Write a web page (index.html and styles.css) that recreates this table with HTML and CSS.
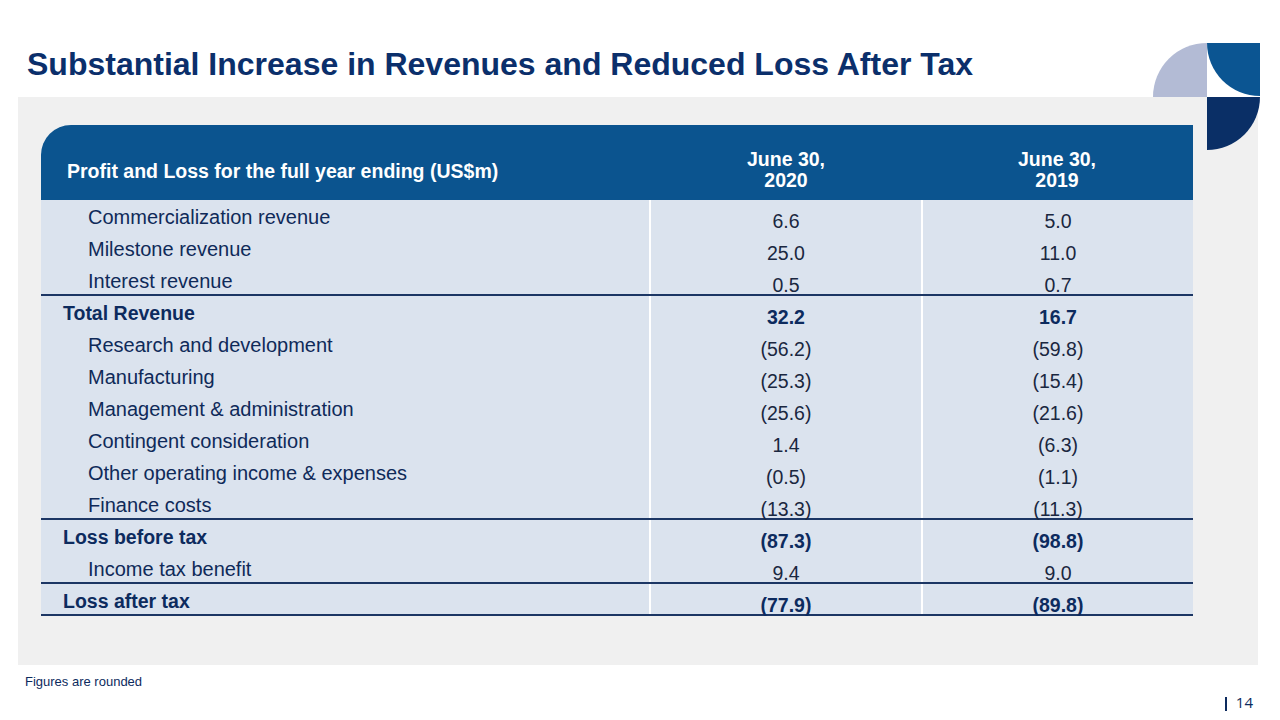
FILE: index.html
```html
<!DOCTYPE html>
<html>
<head>
<meta charset="utf-8">
<link rel="stylesheet" href="styles.css">
</head>
<body>
<div class="slide">
  <header class="top">
    <h1 class="title">Substantial Increase in Revenues and Reduced Loss After Tax</h1>
  </header>
  <svg class="logo" width="108" height="108" viewBox="0 0 108 108">
    <path d="M54 54 L0 54 A54 54 0 0 1 54 0 Z" fill="#b3bbd5"/>
    <path d="M107 0 L54 0 A53 53 0 0 0 107 53 Z" fill="#0b5592"/>
    <path d="M54 54 L107 54 A53 53 0 0 1 54 107 Z" fill="#0a2f66"/>
  </svg>
  <main class="panel">
    <div class="table">
      <div class="thead">
        <div class="th th-label">Profit and Loss for the full year ending (US$m)</div>
        <div class="th">June 30,<br>2020</div>
        <div class="th">June 30,<br>2019</div>
      </div>
      <div class="row"><div class="cell label">Commercialization revenue</div><div class="cell val">6.6</div><div class="cell val">5.0</div></div>
      <div class="row"><div class="cell label">Milestone revenue</div><div class="cell val">25.0</div><div class="cell val">11.0</div></div>
      <div class="row line"><div class="cell label">Interest revenue</div><div class="cell val">0.5</div><div class="cell val">0.7</div></div>
      <div class="row bold"><div class="cell label">Total Revenue</div><div class="cell val">32.2</div><div class="cell val">16.7</div></div>
      <div class="row"><div class="cell label">Research and development</div><div class="cell val">(56.2)</div><div class="cell val">(59.8)</div></div>
      <div class="row"><div class="cell label">Manufacturing</div><div class="cell val">(25.3)</div><div class="cell val">(15.4)</div></div>
      <div class="row"><div class="cell label">Management &amp; administration</div><div class="cell val">(25.6)</div><div class="cell val">(21.6)</div></div>
      <div class="row"><div class="cell label">Contingent consideration</div><div class="cell val">1.4</div><div class="cell val">(6.3)</div></div>
      <div class="row"><div class="cell label">Other operating income &amp; expenses</div><div class="cell val">(0.5)</div><div class="cell val">(1.1)</div></div>
      <div class="row line"><div class="cell label">Finance costs</div><div class="cell val">(13.3)</div><div class="cell val">(11.3)</div></div>
      <div class="row bold"><div class="cell label">Loss before tax</div><div class="cell val">(87.3)</div><div class="cell val">(98.8)</div></div>
      <div class="row line"><div class="cell label">Income tax benefit</div><div class="cell val">9.4</div><div class="cell val">9.0</div></div>
      <div class="row bold line"><div class="cell label">Loss after tax</div><div class="cell val">(77.9)</div><div class="cell val">(89.8)</div></div>
    </div>
  </main>
  <footer class="foot">
    <span class="note">Figures are rounded</span>
    <span class="page"><span class="mark"></span>14</span>
  </footer>
</div>
</body>
</html>
```
FILE: styles.css
```css
html, body {
  margin: 0;
  padding: 0;
  background: #ffffff;
}
.slide {
  position: relative;
  width: 1280px;
  height: 720px;
  overflow: hidden;
  font-family: "Liberation Sans", Arial, sans-serif;
  color: #0d2b5e;
}
.top {
  height: 97px;
  padding-left: 27px;
  box-sizing: border-box;
}
.title {
  margin: 0;
  padding-top: 46px;
  font-size: 32px;
  line-height: 36px;
  font-weight: bold;
  color: #0b2f6b;
}
.logo {
  position: absolute;
  left: 1153px;
  top: 43px;
}
.panel {
  margin-left: 18px;
  width: 1240px;
  height: 568px;
  background: #f0f0f0;
  padding: 28px 0 0 23px;
  box-sizing: border-box;
}
.table {
  width: 1152px;
}
.thead {
  display: grid;
  grid-template-columns: 610px 270px 272px;
  height: 75px;
  background: #0b548f;
  border-top-left-radius: 30px;
  color: #ffffff;
  font-weight: bold;
}
.th {
  font-size: 19.5px;
  line-height: 21px;
  text-align: center;
  padding-top: 24px;
}
.th-label {
  text-align: left;
  padding-left: 26px;
  padding-top: 36px;
  font-size: 19.5px;
}
.row {
  display: grid;
  grid-template-columns: 608px 270px 270px;
  grid-template-rows: minmax(0, 1fr);
  column-gap: 2px;
  height: 32px;
  box-sizing: border-box;
  background: #ffffff;
}
.row.line {
  border-bottom: 2px solid #1c3664;
}
.cell {
  background: #dbe3ee;
  font-size: 20px;
  line-height: 20px;
  min-height: 0;
  box-sizing: border-box;
}
.label {
  padding-left: 47px;
  padding-top: 7px;
  color: #0f2a59;
}
.val {
  text-align: center;
  padding-top: 11px;
  font-size: 19.5px;
  color: #1a2740;
}
.row.bold .cell {
  font-weight: bold;
  color: #0d2b5e;
}
.row.bold .label {
  padding-left: 22px;
  font-size: 19.5px;
}
.foot {
  display: flex;
  justify-content: space-between;
  align-items: flex-start;
  padding: 9px 27px 0 25px;
}
.note {
  font-size: 13px;
  line-height: 16px;
  color: #0d2b5e;
}
.page {
  margin-top: 19px;
  font-size: 15px;
  line-height: 16px;
  color: #0d2b5e;
  display: flex;
  align-items: center;
  gap: 9px;
  font-family: "Open Sans", "Liberation Sans", sans-serif;
}
.mark {
  display: inline-block;
  width: 1.5px;
  height: 14px;
  margin-top: 4px;
  background: #0d2b5e;
}
```
